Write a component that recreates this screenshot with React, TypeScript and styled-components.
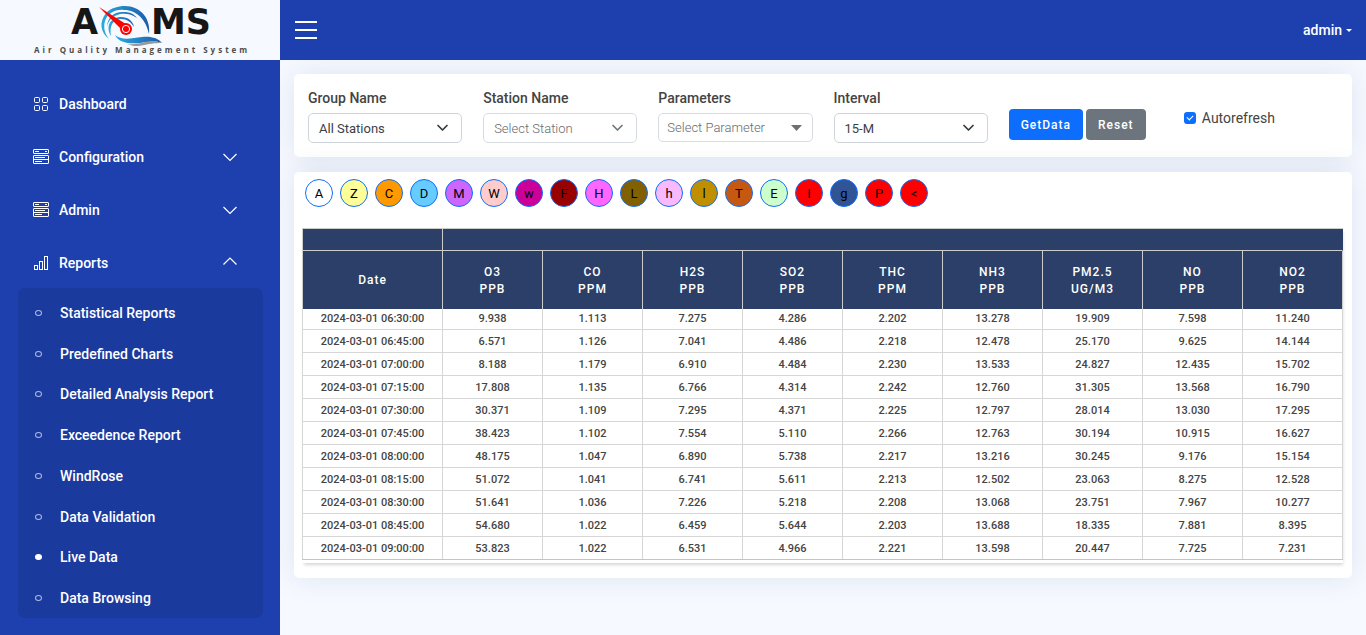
import React from "react";
import styled, { createGlobalStyle } from "styled-components";

const GlobalStyle = createGlobalStyle`
  *, *::before, *::after { box-sizing: border-box; }
  body {
    margin: 0;
    background: #f6f9ff;
    color: #444;
    font-family: Roboto, "Liberation Sans", sans-serif;
    font-size: 14px;
  }
  button, select, input { font: inherit; }
  ul { list-style: none; margin: 0; padding: 0; }
`;

const Page = styled.div`
  display: grid;
  grid-template-columns: 280px minmax(0, 1fr);
  grid-template-rows: 60px auto;
  min-height: 100vh;
`;

const Brand = styled.a`
  display: block;
  background: #f6f9ff;
  svg { display: block; }
`;

const TopBar = styled.header`
  display: flex;
  align-items: center;
  justify-content: space-between;
  padding: 0 14px;
  background: #1e40af;
`;

const MenuToggle = styled.button`
  display: flex;
  flex-direction: column;
  gap: 6px;
  padding: 0;
  margin-left: 1px;
  border: 0;
  background: none;
  cursor: pointer;
  span { width: 22px; height: 2px; background: #fff; }
`;

const UserMenu = styled.button`
  display: flex;
  align-items: center;
  gap: 4px;
  padding: 0;
  border: 0;
  background: none;
  color: #fff;
  font-weight: 500;
  cursor: pointer;
  &::after {
    content: "";
    border: 3px solid transparent;
    border-top-color: #fff;
    border-bottom: 0;
  }
`;

const Sidebar = styled.aside`
  background: #1e40af;
  padding: 34px 17px 16px 18px;
`;

const NavList = styled.ul`
  display: flex;
  flex-direction: column;
  gap: 33px;
`;

const NavLink = styled.a`
  display: grid;
  grid-template-columns: 16px 1fr 16px;
  align-items: center;
  column-gap: 10px;
  height: 20px;
  padding: 0 25px 0 15px;
  color: #fff;
  font-weight: 500;
  text-decoration: none;
`;

const SubList = styled.ul`
  display: flex;
  flex-direction: column;
  justify-content: space-between;
  height: 330px;
  margin-top: 15px;
  padding: 15px 16px 10px 17px;
  border-radius: 7px;
  background: #1b3a9e;
`;

const SubLink = styled.a<{ $active: boolean }>`
  display: flex;
  align-items: center;
  gap: 18px;
  height: 20px;
  color: #fff;
  font-weight: 500;
  text-decoration: none;
  &::before {
    content: "";
    width: 7px;
    height: 6px;
    border: 1px solid ${(p) => (p.$active ? "#fff" : "#a9b9e4")};
    border-radius: 50%;
    background: ${(p) => (p.$active ? "#fff" : "transparent")};
  }
`;

const Main = styled.main`
  display: flex;
  flex-direction: column;
  gap: 15px;
  padding: 14px;
  overflow: hidden;
`;

const Card = styled.section`
  border-radius: 5px;
  background: #fff;
  box-shadow: 0 0 30px rgba(1, 41, 112, 0.1);
`;

const Filters = styled(Card)`
  display: grid;
  grid-template-columns: repeat(6, minmax(0, 1fr));
  column-gap: 21px;
  padding: 14px;
`;

const Field = styled.div`
  display: flex;
  flex-direction: column;
  gap: 5px;
  label { line-height: 20px; font-weight: 500; }
`;

const SelectBox = styled.div<{ $inset: number }>`
  position: relative;
  svg {
    position: absolute;
    right: ${(p) => p.$inset}px;
    top: 9px;
    pointer-events: none;
  }
`;

const Select = styled.select<{ $muted?: boolean; $compact?: boolean }>`
  display: block;
  width: 100%;
  height: ${(p) => (p.$compact ? 29 : 30)}px;
  padding: 0 ${(p) => (p.$compact ? 8 : 10)}px;
  border: 1px solid ${(p) => (p.$muted ? "#d8dce1" : "#ced4da")};
  border-radius: 5px;
  background: #fff;
  color: ${(p) => (p.$muted ? "#666b70" : "#3d4146")};
  font-size: 13px;
  font-weight: ${(p) => (p.$muted ? 300 : 400)};
  appearance: none;
`;

const Actions = styled.div`
  display: flex;
  align-items: flex-start;
  gap: 3px;
  padding-top: 21px;
`;

const Button = styled.button<{ $tone: string }>`
  height: 31px;
  padding: 0 12px;
  border: 0;
  border-radius: 4px;
  background: ${(p) => p.$tone};
  color: #fff;
  font-size: 12px;
  font-weight: 500;
  letter-spacing: 1px;
  cursor: pointer;
`;

const Check = styled.label`
  display: flex;
  align-items: center;
  gap: 6px;
  align-self: start;
  height: 20px;
  margin-top: 20px;
`;

const CheckInput = styled.input`
  appearance: none;
  display: grid;
  place-items: center;
  width: 12px;
  height: 12px;
  margin: 0;
  border-radius: 3px;
  background: #0d6efd;
  &::after {
    content: "";
    width: 4px;
    height: 6px;
    margin-bottom: 2px;
    border: solid #fff;
    border-width: 0 1px 1px 0;
    transform: rotate(45deg);
  }
`;

const DataCard = styled(Card)`
  padding: 7px 9px 15px 8px;
`;

const Flags = styled.div`
  display: flex;
  flex-wrap: wrap;
  gap: 7px;
  padding: 0 3px;
  margin-bottom: 21px;
`;

const Flag = styled.button<{ $fill: string }>`
  width: 28px;
  height: 28px;
  padding: 0;
  border: 1px solid #0d6efd;
  border-radius: 50%;
  background: ${(p) => p.$fill};
  color: #000;
  font-size: 13px;
`;

const TableFrame = styled.div`
  padding-bottom: 3px;
  box-shadow: 1px 3px 3px -1px rgba(0, 0, 0, 0.16);
`;

const Table = styled.table`
  width: 100%;
  table-layout: fixed;
  border-collapse: separate;
  border-spacing: 0;
  border-top: 1px solid #ccc;
  border-bottom: 1px solid #c4c4c4;
  text-align: center;

  th, td { padding: 0; border-right: 1px solid #ccc; }
  th:first-child, td:first-child { width: 141px; border-left: 1px solid #ccc; }
  th {
    background: #2b3f68;
    color: #fff;
    font-size: 12px;
    font-weight: 500;
    letter-spacing: 1px;
    line-height: 17px;
  }
  thead tr:first-child th { height: 22px; border-bottom: 1px solid #ccc; }
  thead tr:first-child th:last-child { border-right-color: #2b3f68; }
  thead tr:last-child th { height: 58px; padding-top: 1px; }
  td {
    height: 23px;
    padding-top: 2px;
    border-color: #d6d6d6;
    border-bottom: 1px solid #d6d6d6;
    font-size: 11px;
    font-weight: 500;
    line-height: 20px;
  }
  td:first-child { border-left-color: #d6d6d6; }
  tbody tr:first-child td { height: 21px; padding-top: 0; }
  tbody tr:last-child td { height: 22px; border-bottom: 0; }
`;

const GridIcon = () => (
  <svg width="16" height="16" viewBox="0 0 16 16" fill="none" stroke="#fff">
    <rect x="1.5" y="1.5" width="5" height="5" rx="1" />
    <rect x="9.5" y="1.5" width="5" height="5" rx="1" />
    <rect x="1.5" y="9.5" width="5" height="5" rx="1" />
    <rect x="9.5" y="9.5" width="5" height="5" rx="1" />
  </svg>
);

const StackIcon = () => (
  <svg width="16" height="16" viewBox="0 0 16 16" fill="none" stroke="#fff">
    <rect x="0.5" y="0.5" width="15" height="4" rx="0.5" />
    <rect x="0.5" y="6.5" width="15" height="8" rx="0.5" />
    <path d="M2 2.5h4M12 2.5h2M2 8.5h10M1 10.5h14M2 12.5h7" />
  </svg>
);

const BarsIcon = () => (
  <svg width="16" height="16" viewBox="0 0 16 16" fill="none" stroke="#fff">
    <rect x="1.5" y="10.5" width="3" height="4" />
    <rect x="6.5" y="6.5" width="3" height="8" />
    <rect x="11.5" y="1.5" width="3" height="13" />
  </svg>
);

const Chevron = ({ up = false }: { up?: boolean }) => (
  <svg width="16" height="16" viewBox="0 0 16 16" fill="none" stroke="#fff" strokeWidth="1.2">
    <path d={up ? "M1.5 9.5L8 3l6.5 6.5" : "M1.5 5L8 11.5L14.5 5"} />
  </svg>
);

const Logo = () => (
  <svg width="280" height="60" viewBox="0 0 280 60" role="img" aria-label="AQMS">
    <defs>
      <linearGradient id="swoosh" x1="0" x2="1">
        <stop offset="0" stopColor="#2aa9dd" />
        <stop offset="1" stopColor="#1c5cab" />
      </linearGradient>
    </defs>
    <g fill="#161616" fontFamily="'DejaVu Sans', sans-serif" fontWeight="700" fontSize="35">
      <text x="71" y="34">A</text>
      <text x="151" y="34">MS</text>
    </g>
    <g fill="url(#swoosh)">
      <path d="M109 39C100 32 99 22 106 13C111 8 118 6 125 6C140 6 151 18 149 34C146 20 137 10 124 10C115 9 108 13 105 21C103 28 105 34 109 39Z" />
      <path d="M107 27C107 17 115 11 124 12C130 12 134 14 137 18C132 14 126 13 120 14C112 16 108 21 107 27Z" />
      <path d="M111 36C105 26 111 17 121 17C128 17 133 21 134 27C131 22 127 19 121 19C113 19 109 26 111 36Z" />
      <path d="M115 35C122 41 132 38 142 37C151 36 158 38 162 43C154 40 148 42 140 43C129 44 119 43 115 35Z" />
    </g>
    <path d="M127 44C137 45 142 42 152 41C156 41 159 42 162 43C154 43 149 44 144 45C138 47 132 46 127 44Z" fill="#999" />
    <path d="M99 7L129 26L124 32Z" fill="#f00" />
    <circle cx="126" cy="29" r="6" fill="#f00" />
    <circle cx="126" cy="29" r="3.6" fill="none" stroke="#fff" strokeWidth="1" />
    <text
      x="34" y="53" fill="#4c4c4c" fontFamily="'Open Sans', sans-serif"
      fontWeight="700" fontSize="8" letterSpacing="3"
    >
      Air Quality Management System
    </text>
  </svg>
);

const ArrowDown = ({ color }: { color: string }) => (
  <svg width="13" height="12" viewBox="0 0 13 12" fill="none" stroke={color} strokeWidth="1.7" strokeLinecap="round" strokeLinejoin="round">
    <path d="M2 3.5L6.5 8L11 3.5" />
  </svg>
);

const Triangle = () => (
  <svg width="13" height="12" viewBox="0 0 13 12" fill="#707070">
    <path d="M1 3h11L6.5 9Z" />
  </svg>
);

const nav = [
  { label: "Dashboard", icon: <GridIcon /> },
  { label: "Configuration", icon: <StackIcon />, arrow: <Chevron /> },
  { label: "Admin", icon: <StackIcon />, arrow: <Chevron /> },
  { label: "Reports", icon: <BarsIcon />, arrow: <Chevron up /> },
];

const reports = [
  "Statistical Reports", "Predefined Charts", "Detailed Analysis Report", "Exceedence Report",
  "WindRose", "Data Validation", "Live Data", "Data Browsing",
];

const flags: [string, string][] = [
  ["A", "#ffffff"], ["Z", "#ffff99"], ["C", "#ff9900"], ["D", "#66ccff"], ["M", "#cc66ff"],
  ["W", "#ffcccc"], ["w", "#cc0099"], ["F", "#990000"], ["H", "#ff66ff"], ["L", "#806000"],
  ["h", "#f9b9ff"], ["l", "#bf8f00"], ["T", "#c65911"], ["E", "#ccffcc"], ["I", "#ff0000"],
  ["g", "#305496"], ["P", "#ff0000"], ["<", "#ff0000"],
];

const columns = [
  ["O3", "PPB"], ["CO", "PPM"], ["H2S", "PPB"], ["SO2", "PPB"], ["THC", "PPM"],
  ["NH3", "PPB"], ["PM2.5", "UG/M3"], ["NO", "PPB"], ["NO2", "PPB"],
];

const rows = [
  "06:30 9.938 1.113 7.275 4.286 2.202 13.278 19.909 7.598 11.240",
  "06:45 6.571 1.126 7.041 4.486 2.218 12.478 25.170 9.625 14.144",
  "07:00 8.188 1.179 6.910 4.484 2.230 13.533 24.827 12.435 15.702",
  "07:15 17.808 1.135 6.766 4.314 2.242 12.760 31.305 13.568 16.790",
  "07:30 30.371 1.109 7.295 4.371 2.225 12.797 28.014 13.030 17.295",
  "07:45 38.423 1.102 7.554 5.110 2.266 12.763 30.194 10.915 16.627",
  "08:00 48.175 1.047 6.890 5.738 2.217 13.216 30.245 9.176 15.154",
  "08:15 51.072 1.041 6.741 5.611 2.213 12.502 23.063 8.275 12.528",
  "08:30 51.641 1.036 7.226 5.218 2.208 13.068 23.751 7.967 10.277",
  "08:45 54.680 1.022 6.459 5.644 2.203 13.688 18.335 7.881 8.395",
  "09:00 53.823 1.022 6.531 4.966 2.221 13.598 20.447 7.725 7.231",
].map((line) => line.split(" "));

export default function App() {
  return (
    <>
      <GlobalStyle />
      <Page>
        <Brand href="#"><Logo /></Brand>
        <TopBar>
          <MenuToggle aria-label="Toggle menu"><span /><span /><span /></MenuToggle>
          <UserMenu>admin</UserMenu>
        </TopBar>
        <Sidebar>
          <nav>
            <NavList>
              {nav.map((item) => (
                <li key={item.label}>
                  <NavLink href="#">
                    {item.icon}
                    <span>{item.label}</span>
                    {item.arrow}
                  </NavLink>
                  {item.label === "Reports" && (
                    <SubList>
                      {reports.map((name) => (
                        <li key={name}>
                          <SubLink href="#" $active={name === "Live Data"}>{name}</SubLink>
                        </li>
                      ))}
                    </SubList>
                  )}
                </li>
              ))}
            </NavList>
          </nav>
        </Sidebar>
        <Main>
          <Filters>
            <Field>
              <label htmlFor="group">Group Name</label>
              <SelectBox $inset={13}>
                <Select id="group"><option>All Stations</option></Select>
                <ArrowDown color="#343a40" />
              </SelectBox>
            </Field>
            <Field>
              <label htmlFor="station">Station Name</label>
              <SelectBox $inset={13}>
                <Select id="station" $muted><option>Select Station</option></Select>
                <ArrowDown color="#71767b" />
              </SelectBox>
            </Field>
            <Field>
              <label htmlFor="parameter">Parameters</label>
              <SelectBox $inset={10}>
                <Select id="parameter" $muted $compact><option>Select Parameter</option></Select>
                <Triangle />
              </SelectBox>
            </Field>
            <Field>
              <label htmlFor="interval">Interval</label>
              <SelectBox $inset={13}>
                <Select id="interval"><option>15-M</option></Select>
                <ArrowDown color="#343a40" />
              </SelectBox>
            </Field>
            <Actions>
              <Button $tone="#0d6efd">GetData</Button>
              <Button $tone="#6c757d">Reset</Button>
            </Actions>
            <Check>
              <CheckInput type="checkbox" defaultChecked />
              Autorefresh
            </Check>
          </Filters>
          <DataCard>
            <Flags>
              {flags.map(([letter, fill]) => (
                <Flag key={letter} $fill={fill}>{letter}</Flag>
              ))}
            </Flags>
            <TableFrame>
              <Table>
                <thead>
                  <tr><th /><th colSpan={9} /></tr>
                  <tr>
                    <th>Date</th>
                    {columns.map(([name, unit]) => (
                      <th key={name}>{name}<br />{unit}</th>
                    ))}
                  </tr>
                </thead>
                <tbody>
                  {rows.map(([time, ...values]) => (
                    <tr key={time}>
                      <td>2024-03-01 {time}:00</td>
                      {values.map((value, i) => <td key={i}>{value}</td>)}
                    </tr>
                  ))}
                </tbody>
              </Table>
            </TableFrame>
          </DataCard>
        </Main>
      </Page>
    </>
  );
}
